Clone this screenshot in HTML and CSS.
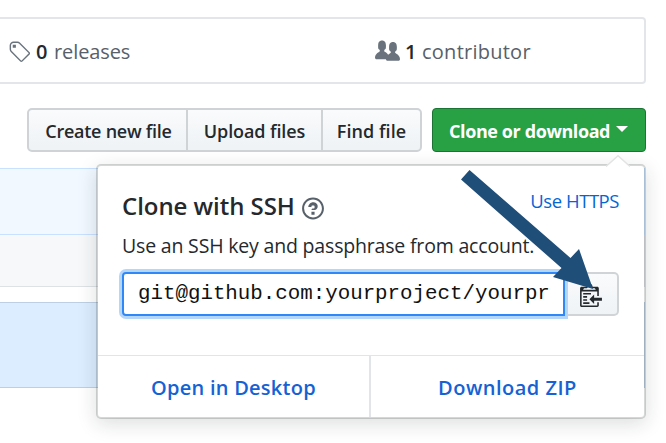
FILE: index.html
```
<!DOCTYPE html>
<html lang="en">
<head>
<meta charset="utf-8">
<title>Clone repository</title>
<link rel="stylesheet" href="styles.css">
</head>
<body>
<main class="page">
  <section class="summary">
    <div class="stat releases">
      <svg class="tag-icon" viewBox="0 0 14 16"><path fill-rule="evenodd" d="M7.73 1.73C7.26 1.26 6.62 1 5.96 1H3.5C2.13 1 1 2.13 1 3.5v2.47c0 .66.27 1.3.73 1.77l6.06 6.06c.39.39 1.02.39 1.41 0l4.59-4.59a.996.996 0 0 0 0-1.41L7.73 1.73zM2.38 7.09c-.31-.3-.47-.7-.47-1.13V3.5c0-.88.72-1.59 1.59-1.59h2.47c.42 0 .83.16 1.13.47l6.14 6.13-4.73 4.73-6.13-6.15zM3.01 3h2v2H3V3h.01z"/></svg>
      <b>0</b><span>releases</span>
    </div>
    <div class="stat contributors">
      <svg class="org-icon" viewBox="0 0 16 16"><path fill-rule="evenodd" d="M16 12.999c0 .439-.45 1-1 1H7.995c-.539 0-.994-.447-.995-.999H1c-.54 0-1-.561-1-1 0-2.634 3-4 3-4s.229-.409 0-1c-.841-.621-1.058-.59-1-3 .058-2.419 1.367-3 2.5-3s2.442.58 2.5 3c.058 2.41-.159 2.379-1 3-.229.59 0 1 0 1s1.549.711 2.42 2.088C9.196 9.369 10 8.999 10 8.999s.229-.409 0-1c-.841-.62-1.058-.59-1-3 .058-2.419 1.367-3 2.5-3s2.437.581 2.495 3c.059 2.41-.158 2.38-1 3-.229.59 0 1 0 1s3.005 1.366 3.005 4"/></svg>
      <b>1</b><span>contributor</span>
    </div>
  </section>
  <nav class="toolbar">
    <div class="group">
      <button class="create">Create new file</button>
      <button class="upload">Upload files</button>
      <button class="find">Find file</button>
    </div>
    <button class="clone"><span>Clone or download</span><i class="caret"></i></button>
  </nav>
  <div class="files">
    <div class="commit"></div>
    <div class="head"></div>
    <div class="selected"></div>
  </div>
  <section class="popover">
    <svg class="pointer" viewBox="0 0 24 12"><path d="M0 12L12 .8 24 12z"/><path class="pointer-line" d="M0 11.4L12 .8 24 11.4"/></svg>
    <div class="body">
      <header class="title-row">
        <h1>Clone with SSH</h1>
        <svg class="help-icon" viewBox="0 0 14 16"><path fill-rule="evenodd" d="M6 10h2v2H6v-2zm4-3.5C10 8.64 8 9 8 9H6c0-.55.45-1 1-1h.5c.28 0 .5-.22.5-.5v-1c0-.28-.22-.5-.5-.5h-1c-.28 0-.5.22-.5.5V7H4c0-1.5 1.5-3 3-3s3 1 3 2.5zM7 2.3c3.14 0 5.7 2.56 5.7 5.7s-2.56 5.7-5.7 5.7A5.71 5.71 0 0 1 1.3 8c0-3.14 2.56-5.7 5.7-5.7zM7 1C3.14 1 0 4.14 0 8s3.14 7 7 7 7-3.14 7-7-3.14-7-7-7z"/></svg>
        <a class="https">Use HTTPS</a>
      </header>
      <p class="hint">Use an SSH key and passphrase from account.</p>
      <div class="url-row">
        <div class="url"><span>git@github.com:yourproject/yourpr</span></div>
        <button class="copy" aria-label="Copy"><svg viewBox="0 0 14 16"><path fill-rule="evenodd" d="M2 13h4v1H2v-1zm5-6H2v1h5V7zm2 3V8l-3 3 3 3v-2h5v-2H9zM4.5 9H2v1h2.5V9zM2 12h2.5v-1H2v1zm9 1h1v2c-.02.28-.11.52-.3.7-.19.18-.42.28-.7.3H1c-.55 0-1-.45-1-1V4c0-.55.45-1 1-1h3c0-1.11.89-2 2-2 1.11 0 2 .89 2 2h3c.55 0 1 .45 1 1v5h-1V6H1v9h10v-2zM2 5h8c0-.55-.45-1-1-1H8c-.55 0-1-.45-1-1s-.45-1-1-1-1 .45-1 1-.45 1-1 1H3c-.55 0-1 .45-1 1z"/></svg></button>
      </div>
    </div>
    <footer class="actions">
      <a class="desktop">Open in Desktop</a>
      <a class="zip">Download ZIP</a>
    </footer>
  </section>
  <svg class="arrow" viewBox="0 0 132 122"><path d="M8.5 0L109.5 88 118 79 132 119 92 107 100.5 98 0 9.5z"/></svg>
</main>
</body>
</html>
```
FILE: styles.css
```
* { box-sizing: border-box; }
body { margin: 0; background: #fff; font-family: "Open Sans", "Noto Sans", sans-serif; color: #24292e; }
.page { position: relative; width: 666px; height: 443px; overflow: hidden; padding-top: 17px; white-space: nowrap; }
svg { display: block; fill: currentColor; flex: none; }
button { font: inherit; color: inherit; margin: 0; padding: 0; }

.summary { display: flex; width: 646px; height: 67px; border: 2px solid #e3e6e8; border-left: 0; border-radius: 0 4px 4px 0; color: #586069; font-size: 20px; letter-spacing: -.1px; }
.stat { display: flex; align-items: center; height: 65px; }
.releases { width: 375px; padding-left: 8px; }
.stat b { color: #24292e; font-weight: 600; width: 11px; letter-spacing: 0; }
.stat span { margin-left: 7px; }
.contributors span { margin-left: 6px; letter-spacing: .25px; }
.stat svg { color: #6a737d; }
.tag-icon { width: 22px; height: 25px; margin-right: 6px; margin-top: 2px; }
.org-icon { width: 25px; height: 25px; margin-right: 5px; }

.toolbar { display: flex; gap: 10px; width: 646px; height: 44px; margin: 24px 0 0 27px; font-size: 18px; font-weight: 600; }
.group { display: flex; width: 395px; border: 2px solid #cfd3d6; border-radius: 5px; background: linear-gradient(#fafbfc, #eff3f6 90%); overflow: hidden; }
.group button { border: 0; background: none; text-align: center; padding-top: 1px; }
.group .create { width: 157px; padding-left: 2px; letter-spacing: -.25px; }
.group .upload { width: 135px; border-left: 2px solid #cfd3d6; letter-spacing: -.1px; }
.group .find { flex: 1; border-left: 2px solid #cfd3d6; letter-spacing: .05px; }
.clone { display: flex; align-items: center; width: 214px; padding-left: 16px; border: 1.5px solid #1b7434; border-radius: 4px; background: #28a044; color: #fff; font-weight: 700; letter-spacing: -.4px; }
.clone span { width: 167px; text-align: left; padding-top: 1px; }
.caret { border: 6px solid transparent; border-top-color: #fff; border-bottom: 0; margin-top: -3px; }

.files { width: 645px; margin-top: 16px; }
.commit { height: 67px; border: 1.5px solid #c8e1ff; border-left: 0; background: #f1f8ff; }
.head { height: 52px; border: 1.5px solid #dfe2e5; border-left: 0; border-top: 0; background: #f6f8fa; }
.selected { height: 86px; margin-top: 15px; border: 1.5px solid #bdd0e3; border-left: 0; background: #dbedff; }

.popover { position: absolute; left: 96px; top: 164px; width: 550px; height: 255px; border: 2px solid rgba(27,31,35,.18); border-radius: 5px; background: #fff; background-clip: padding-box; box-shadow: 0 5px 19px rgba(27,31,35,.15); }
.pointer { position: absolute; right: 14px; top: -11px; width: 24px; height: 12px; fill: #fff; }
.pointer-line { fill: none; stroke: #e2e3e3; stroke-width: 1.5; }
.body { height: 189px; padding: 22px 25px 0 24px; }
.title-row { display: flex; height: 40px; }
.title-row h1 { margin: 0; width: 180px; font-size: 24px; line-height: 36px; font-weight: 600; letter-spacing: -.05px; }
.help-icon { width: 22px; height: 25px; margin-top: 8px; color: #586069; }
a { color: #1462d4; }
.https { margin-left: auto; color: #0366d6; font-size: 18.5px; line-height: 26px; letter-spacing: -.45px; }
.hint { margin: 3px 0 0; height: 41px; font-size: 19.5px; line-height: 29px; letter-spacing: -.18px; }
.url-row { display: flex; height: 44px; }
.url { position: relative; width: 443px; height: 44px; border: 2px solid #2f88f7; border-radius: 4px 0 0 4px; box-shadow: 0 0 0 3px #b5d6fb; padding-left: 14px; background: #fff; color: #111; font-family: "Liberation Mono", monospace; font-size: 20.8px; line-height: 40px; }
.copy { width: 54px; border: 2px solid #d1d4d7; border-left: 0; border-radius: 0 5px 5px 0; background: linear-gradient(#fafbfc, #eff3f6); padding: 0 0 0 15px; }
.copy svg { width: 22px; height: 25px; }
.actions { display: flex; height: 62px; border-top: 1.5px solid #e1e4e8; font-size: 20px; line-height: 63px; font-weight: 600; }
.actions a { text-align: center; }
.desktop { width: 273px; border-right: 2px solid #e1e4e8; letter-spacing: .25px; }
.zip { flex: 1; letter-spacing: .5px; }
.arrow { position: absolute; left: 461px; top: 170px; width: 132px; height: 122px; fill: #1f4e79; }
```
